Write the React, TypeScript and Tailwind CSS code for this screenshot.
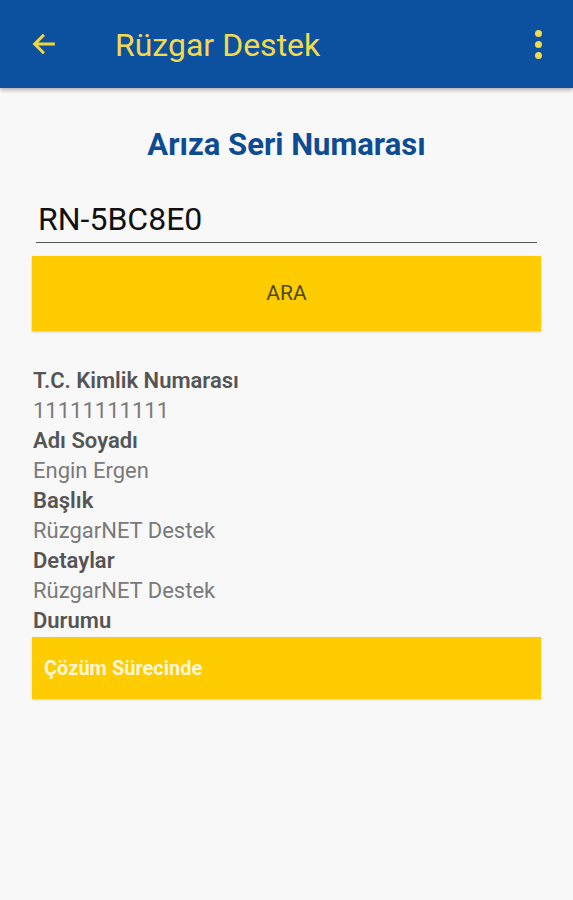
import React from 'react';

const fields: { label: string; value: string }[] = [
  { label: 'T.C. Kimlik Numarası', value: '11111111111' },
  { label: 'Adı Soyadı', value: 'Engin Ergen' },
  { label: 'Başlık', value: 'RüzgarNET Destek' },
  { label: 'Detaylar', value: 'RüzgarNET Destek' },
];

const App: React.FC = () => {
  return (
    <div className="min-h-[900px] bg-[#f8f8f8] font-['Roboto',sans-serif]">
      <header className="h-[88px] bg-[#0b519f] flex items-center pl-[30px] pr-[31px] shadow-[0_2px_4px_rgba(0,0,0,0.3)]">
        <svg width="28" height="28" viewBox="0 0 24 24" className="text-[#f3d53d]" fill="none" stroke="currentColor" strokeWidth={2.6} strokeLinecap="square">
          <path d="M20 12H5M11 5l-7 7 7 7" />
        </svg>
        <h1 className="ml-[57px] text-[32px] text-[#f3d94e] leading-none flex-1 pt-[2px]">Rüzgar Destek</h1>
        <div className="flex flex-col gap-[4px] items-center">
          <span className="w-[7px] h-[7px] rounded-full bg-[#f3d94e]"></span>
          <span className="w-[7px] h-[7px] rounded-full bg-[#f3d94e]"></span>
          <span className="w-[7px] h-[7px] rounded-full bg-[#f3d94e]"></span>
        </div>
      </header>

      <div className="px-[32px]">
        <h2 className="text-center text-[31px] font-bold text-[#0d4b93] mt-[41px] leading-none">Arıza Seri Numarası</h2>

        <div className="mt-[41px] mx-[4px] border-b-[1.5px] border-[#555] pb-[5px]">
          <div className="text-[32px] text-[#111] leading-[36px] pl-[2px]">RN-5BC8E0</div>
        </div>

        <button className="mt-[13px] w-[509px] h-[75px] bg-[#fecc00] text-[21px] text-[#4f4a1c] shadow-[0_1px_2px_rgba(0,0,0,0.2)]">
          ARA
        </button>

        <div className="mt-[35px] pl-[1px] text-[22px] leading-[30px]">
          {fields.map((f) => (
            <React.Fragment key={f.label}>
              <div className="font-semibold text-[#555]">{f.label}</div>
              <div className="text-[#7a7a7a]">{f.value}</div>
            </React.Fragment>
          ))}
          <div className="font-semibold text-[#555]">Durumu</div>
        </div>

        <div className="mt-[1px] w-[509px] h-[62px] bg-[#fecc00] flex items-center px-[12px] shadow-[0_1px_2px_rgba(0,0,0,0.15)]">
          <span className="text-[20px] font-bold text-[#fdf6d8]">Çözüm Sürecinde</span>
        </div>
      </div>
    </div>
  );
};

export default App;
